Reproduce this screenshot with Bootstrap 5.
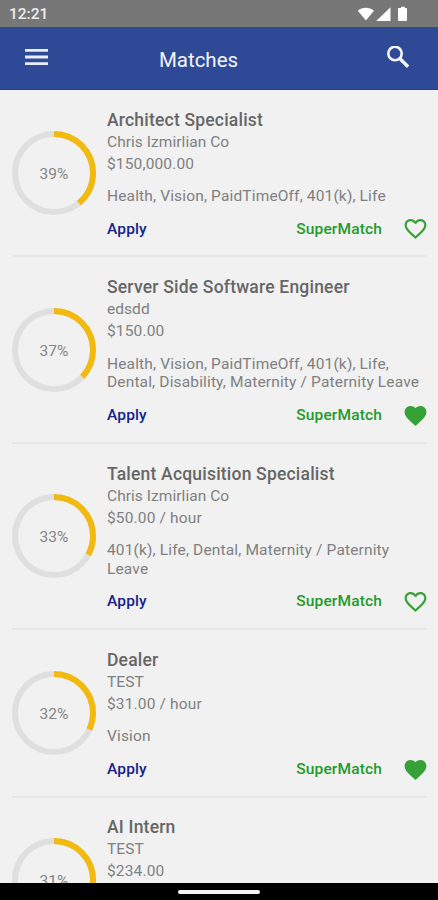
<!DOCTYPE html>
<html lang="en">
<head>
<meta charset="utf-8">
<meta name="viewport" content="width=device-width, initial-scale=1">
<title>Matches</title>
<link href="https://cdn.jsdelivr.net/npm/bootstrap@5.3.0/dist/css/bootstrap.min.css" rel="stylesheet">
<style>
  body { font-family: Roboto, "Liberation Sans", sans-serif; background: #f1f1f1; color: #808080; font-size: 15.5px; letter-spacing: .15px; }
  .status-bar { height: 27px; background: #777; color: #ececec; font-size: 15.5px; font-weight: 500; letter-spacing: 0; padding: 2px 30px 0 9px; }
  .app-bar { height: 62.5px; background: #2e4a96; border-bottom: 1px solid #27408a; padding: 0 28px 0 24px; }
  .app-title { font-size: 20.5px; font-weight: 400; line-height: 24px; letter-spacing: 0; color: #f3f5fb; padding: 4px 37px 0 0; }
  .match-row { height: 167.4px; padding: 0 11px 0 12px; }
  .match-row.two-line { height: 186.4px; }
  .match-list { padding-top: .5px; }
  .match-row > .inner { border-bottom: 2px solid #e7e7e7; }
  .ring { width: 84px; height: 84px; margin: 0 11px 0 0; }
  .ring text { font-size: 15.5px; fill: #858585; letter-spacing: 0; }
  .info { padding-top: 17.800px; }
  .job { font-size: 17.5px; font-weight: 500; line-height: 24px; color: #666; letter-spacing: .2px; }
  .company { line-height: 21px; letter-spacing: .05px; }
  .pay { line-height: 22px; }
  .benefits { line-height: 18.800px; margin-top: 12.500px; }
  .actions { height: 24px; margin-top: 11.300px; font-weight: 500; }
  .apply { color: #14248a; }
  .super { color: #239a2b; }
  .super svg { margin-left: 22px; }
  .nav-pill { width: 82px; height: 4px; background: #f5f5f5; margin-top: 1px; }
  .gesture-bar { height: 17px; background: #000; }
</style>
</head>
<body>
<svg class="d-none">
  <symbol id="heart" viewBox="2 3 20 18.35"><path fill="#36a136" d="M12 21.35l-1.45-1.32C5.4 15.36 2 12.28 2 8.5 2 5.42 4.42 3 7.5 3c1.74 0 3.41.81 4.5 2.09C13.09 3.81 14.76 3 16.5 3 19.58 3 22 5.42 22 8.5c0 3.78-3.4 6.86-8.55 11.54L12 21.35z"/></symbol>
  <symbol id="heart-o" viewBox="2 3 20 18.35"><path fill="#36a136" d="M16.5 3c-1.74 0-3.41.81-4.5 2.09C10.91 3.81 9.24 3 7.5 3 4.42 3 2 5.42 2 8.5c0 3.78 3.4 6.86 8.55 11.54L12 21.35l1.45-1.32C18.6 15.36 22 12.28 22 8.5 22 5.42 19.58 3 16.5 3zm-4.4 15.55l-.1.1-.1-.1C7.14 14.24 4 11.39 4 8.5 4 6.5 5.5 5 7.5 5c1.54 0 3.04.99 3.57 2.36h1.87C13.46 5.99 14.96 5 16.5 5c2 0 3.5 1.5 3.5 3.5 0 2.89-3.14 5.74-7.9 10.05z"/></symbol>
</svg>
<div class="d-flex flex-column vh-100 overflow-hidden">
  <div class="status-bar d-flex align-items-center justify-content-between flex-shrink-0">
    <span>12:21</span>
    <svg width="52" height="17" viewBox="0 0 52 17" fill="#fff"><path d="M1.800 4.800C6 .8 13.500.8 18 4.800L9.900 14.600z"/><path d="M34.500 1.200V15H20.200z"/><path d="M43 2h2.200V.7h3.600V2H50q1 0 1 1v11q0 1-1 1h-7q-1 0-1-1V3q0-1 1-1z"/></svg>
  </div>
  <header class="app-bar d-flex align-items-center justify-content-between flex-shrink-0">
    <svg width="24" height="18" viewBox="0 0 24 18" fill="#e9edf8"><path d="M1 0h23v2.800H1zM1 6.600h23v2.800H1zM1 13.200h23V16H1z"/></svg>
    <h1 class="app-title my-0">Matches</h1>
    <svg width="24" height="24" viewBox="0 0 24 24" fill="none" stroke="#f3f5fb"><circle cx="9" cy="7.500" r="6.700" stroke-width="2.600"/><path d="M13.800 12.500l8.300 8.300" stroke-width="3.400"/></svg>
  </header>
  <main class="match-list flex-grow-1 overflow-hidden">
    <article class="match-row">
      <div class="inner d-flex h-100">
        <svg class="ring align-self-center flex-shrink-0" viewBox="0 0 84 84"><g fill="none" stroke-width="6"><circle cx="42" cy="42" r="39" stroke="#dfdfdf"/><circle cx="42" cy="42" r="39" stroke="#f2b90f" pathLength="100" stroke-dasharray="39 100" transform="rotate(-90 42 42)"/></g><text x="42" y="48" text-anchor="middle">39%</text></svg>
        <div class="info flex-grow-1">
          <h2 class="job m-0">Architect Specialist</h2>
          <div class="company">Chris Izmirlian Co</div>
          <div class="pay">$150,000.00</div>
          <div class="benefits">Health, Vision, PaidTimeOff, 401(k), Life</div>
          <div class="actions d-flex justify-content-between align-items-center"><span class="apply">Apply</span><span class="super d-flex align-items-center">SuperMatch<svg width="23" height="20"><use href="#heart-o"/></svg></span></div>
        </div>
      </div>
    </article>
    <article class="match-row two-line">
      <div class="inner d-flex h-100">
        <svg class="ring align-self-center flex-shrink-0" viewBox="0 0 84 84"><g fill="none" stroke-width="6"><circle cx="42" cy="42" r="39" stroke="#dfdfdf"/><circle cx="42" cy="42" r="39" stroke="#f2b90f" pathLength="100" stroke-dasharray="37 100" transform="rotate(-90 42 42)"/></g><text x="42" y="48" text-anchor="middle">37%</text></svg>
        <div class="info flex-grow-1">
          <h2 class="job m-0">Server Side Software Engineer</h2>
          <div class="company">edsdd</div>
          <div class="pay">$150.00</div>
          <div class="benefits">Health, Vision, PaidTimeOff, 401(k), Life,<br>Dental, Disability, Maternity / Paternity Leave</div>
          <div class="actions d-flex justify-content-between align-items-center"><span class="apply">Apply</span><span class="super d-flex align-items-center">SuperMatch<svg width="23" height="20"><use href="#heart"/></svg></span></div>
        </div>
      </div>
    </article>
    <article class="match-row two-line">
      <div class="inner d-flex h-100">
        <svg class="ring align-self-center flex-shrink-0" viewBox="0 0 84 84"><g fill="none" stroke-width="6"><circle cx="42" cy="42" r="39" stroke="#dfdfdf"/><circle cx="42" cy="42" r="39" stroke="#f2b90f" pathLength="100" stroke-dasharray="33 100" transform="rotate(-90 42 42)"/></g><text x="42" y="48" text-anchor="middle">33%</text></svg>
        <div class="info flex-grow-1">
          <h2 class="job m-0">Talent Acquisition Specialist</h2>
          <div class="company">Chris Izmirlian Co</div>
          <div class="pay">$50.00 / hour</div>
          <div class="benefits">401(k), Life, Dental, Maternity / Paternity<br>Leave</div>
          <div class="actions d-flex justify-content-between align-items-center"><span class="apply">Apply</span><span class="super d-flex align-items-center">SuperMatch<svg width="23" height="20"><use href="#heart-o"/></svg></span></div>
        </div>
      </div>
    </article>
    <article class="match-row">
      <div class="inner d-flex h-100">
        <svg class="ring align-self-center flex-shrink-0" viewBox="0 0 84 84"><g fill="none" stroke-width="6"><circle cx="42" cy="42" r="39" stroke="#dfdfdf"/><circle cx="42" cy="42" r="39" stroke="#f2b90f" pathLength="100" stroke-dasharray="32 100" transform="rotate(-90 42 42)"/></g><text x="42" y="48" text-anchor="middle">32%</text></svg>
        <div class="info flex-grow-1">
          <h2 class="job m-0">Dealer</h2>
          <div class="company">TEST</div>
          <div class="pay">$31.00 / hour</div>
          <div class="benefits">Vision</div>
          <div class="actions d-flex justify-content-between align-items-center"><span class="apply">Apply</span><span class="super d-flex align-items-center">SuperMatch<svg width="23" height="20"><use href="#heart"/></svg></span></div>
        </div>
      </div>
    </article>
    <article class="match-row">
      <div class="inner d-flex h-100">
        <svg class="ring align-self-center flex-shrink-0" viewBox="0 0 84 84"><g fill="none" stroke-width="6"><circle cx="42" cy="42" r="39" stroke="#dfdfdf"/><circle cx="42" cy="42" r="39" stroke="#f2b90f" pathLength="100" stroke-dasharray="31 100" transform="rotate(-90 42 42)"/></g><text x="42" y="48" text-anchor="middle">31%</text></svg>
        <div class="info flex-grow-1">
          <h2 class="job m-0">AI Intern</h2>
          <div class="company">TEST</div>
          <div class="pay">$234.00</div>
        </div>
      </div>
    </article>
  </main>
  <footer class="gesture-bar d-flex align-items-center justify-content-center flex-shrink-0"><div class="nav-pill rounded-pill"></div></footer>
</div>
<script src="https://cdn.jsdelivr.net/npm/bootstrap@5.3.0/dist/js/bootstrap.bundle.min.js"></script>
</body>
</html>
